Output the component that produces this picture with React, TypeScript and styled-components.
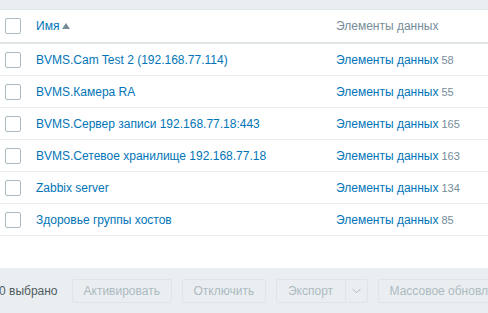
import React from "react";
import styled, { createGlobalStyle } from "styled-components";

const Global = createGlobalStyle`
  html, body { margin: 0; padding: 0; background: #ffffff; }
  body {
    width: 488px; height: 313px; overflow: hidden;
    font-family: "Liberation Sans", Arial, sans-serif;
    font-size: 12px; color: #1f2c33;
  }
`;

const Page = styled.div`
  display: flex;
  flex-direction: column;
  width: 488px;
  height: 313px;
  overflow: hidden;
`;

const TopStrip = styled.div`
  height: 9px;
  background: #ebeef0;
  border-bottom: 1px solid #dfe4e7;
`;

const Table = styled.div`
  display: flex;
  flex-direction: column;
`;

const Row = styled.div<{ $head?: boolean }>`
  display: grid;
  grid-template-columns: 36px 300px 1fr;
  align-items: center;
  height: ${(p) => (p.$head ? "32px" : "31px")};
  border-bottom: ${(p) => (p.$head ? "2px solid #dfe4e7" : "1px solid #ebeef0")};
  white-space: nowrap;
`;

const CheckCell = styled.div`
  display: flex;
  align-items: center;
  padding-left: 5px;
`;

const Checkbox = styled.span`
  display: block;
  box-sizing: border-box;
  width: 16px;
  height: 16px;
  border: 1px solid #acbbc2;
  border-radius: 2px;
  background: #ffffff;
`;

const Link = styled.a`
  color: #0275b8;
  text-decoration: none;
  cursor: pointer;
`;

const SortLink = styled(Link)`
  display: inline-flex;
  align-items: center;
  gap: 3px;
`;

const Arrow = styled.span`
  display: inline-block;
  width: 0;
  height: 0;
  border-left: 4px solid transparent;
  border-right: 4px solid transparent;
  border-bottom: 6px solid #768d99;
  margin-top: -1px;
`;

const HeadText = styled.span`
  color: #768d99;
`;

const Count = styled.sup`
  color: #768d99;
  vertical-align: baseline;
  font-size: 11px;
  margin-left: 3px;
`;

const Spacer = styled.div`
  flex: 0 0 32px;
`;

const Footer = styled.div`
  flex: 1;
  background: #ebeef0;
  display: flex;
  align-items: flex-start;
  padding-top: 11px;
  white-space: nowrap;
`;

const Selected = styled.span`
  line-height: 24px;
  color: #4f5c63;
  margin-left: -1px;
  margin-right: 14px;
`;

const Button = styled.button<{ $w?: number }>`
  box-sizing: border-box;
  height: 24px;
  padding: 0 11px;
  margin-right: 10px;
  font-family: "Liberation Sans", Arial, sans-serif;
  font-size: 12px;
  color: #acbbc2;
  background: #ebeef0;
  border: 1px solid #dfe4e7;
  border-radius: 2px;
  flex-shrink: 0;
  ${(p) => (p.$w ? `width: ${p.$w}px;` : "")}
`;

const SplitGroup = styled.div`
  display: flex;
  margin-right: 10px;
  flex-shrink: 0;
`;

const SplitMain = styled(Button)`
  margin-right: 0;
  border-radius: 2px 0 0 2px;
  border-right: none;
`;

const SplitToggle = styled(Button)`
  margin-right: 0;
  padding: 0;
  width: 23px;
  border-radius: 0 2px 2px 0;
  display: flex;
  align-items: center;
  justify-content: center;
`;

const hosts = [
  { name: "BVMS.Cam Test 2 (192.168.77.114)", items: 58 },
  { name: "BVMS.Камера RA", items: 55 },
  { name: "BVMS.Сервер записи 192.168.77.18:443", items: 165 },
  { name: "BVMS.Сетевое хранилище 192.168.77.18", items: 163 },
  { name: "Zabbix server", items: 134 },
  { name: "Здоровье группы хостов", items: 85 },
];

export default function App() {
  return (
    <Page>
      <Global />
      <TopStrip />
      <Table>
        <Row $head>
          <CheckCell>
            <Checkbox />
          </CheckCell>
          <div>
            <SortLink>
              Имя
              <Arrow />
            </SortLink>
          </div>
          <HeadText>Элементы данных</HeadText>
        </Row>
        {hosts.map((h) => (
          <Row key={h.name}>
            <CheckCell>
              <Checkbox />
            </CheckCell>
            <div>
              <Link>{h.name}</Link>
            </div>
            <div>
              <Link>Элементы данных</Link>
              <Count>{h.items}</Count>
            </div>
          </Row>
        ))}
      </Table>
      <Spacer />
      <Footer>
        <Selected>0 выбрано</Selected>
        <Button $w={100} disabled>Активировать</Button>
        <Button $w={84} disabled>Отключить</Button>
        <SplitGroup>
          <SplitMain $w={69} disabled>Экспорт</SplitMain>
          <SplitToggle disabled>
            <svg width="9" height="6" viewBox="0 0 9 6">
              <path d="M0.5 0.8 L4.5 4.8 L8.5 0.8" fill="none" stroke="#acbbc2" strokeWidth="1" />
            </svg>
          </SplitToggle>
        </SplitGroup>
        <Button disabled>Массовое обновление</Button>
      </Footer>
    </Page>
  );
}
